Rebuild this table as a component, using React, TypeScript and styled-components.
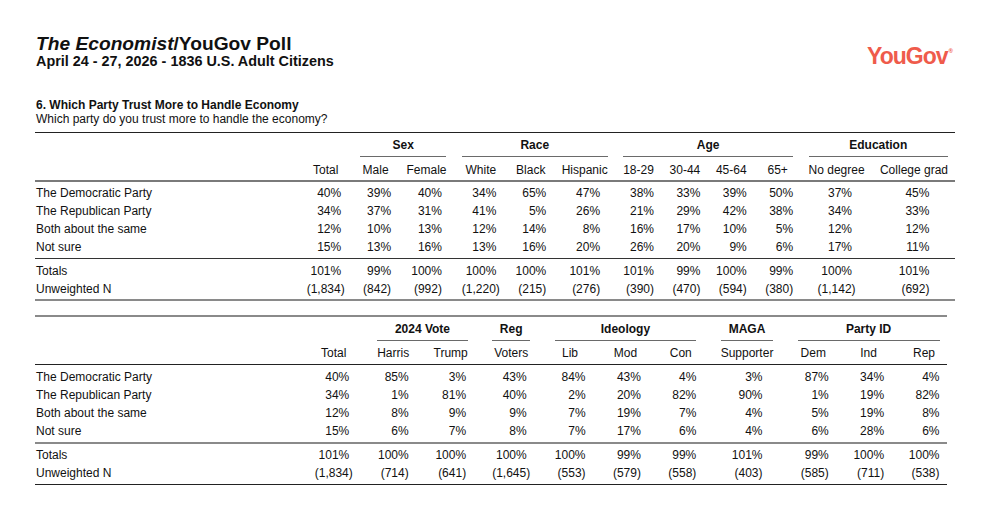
import styled, { createGlobalStyle } from "styled-components";

/* ===============================
   Global
================================ */

const GlobalStyle = createGlobalStyle`
  html, body {
    margin: 0;
    padding: 0;
    background: #ffffff;
  }

  body {
    font-family: "Liberation Sans", Arial, Helvetica, sans-serif;
    color: #111111;
  }
`;

/* ===============================
   Page + header
================================ */

const Page = styled.div`
  width: 920px;
  padding: 34.4px 0 0 35px;
`;

const Header = styled.header`
  display: flex;
  justify-content: space-between;
  align-items: flex-start;
  padding-left: 1px;
`;

const TitleBlock = styled.div`
  display: flex;
  flex-direction: column;
`;

const Title = styled.h1`
  margin: 0;
  font-size: 19.2px;
  line-height: 20px;
  font-weight: 700;

  em {
    font-style: italic;
  }
`;

const Subtitle = styled.div`
  margin-top: -1px;
  font-size: 14.4px;
  line-height: 17px;
  font-weight: 700;
`;

const Logo = styled.div`
  margin-top: 10.6px;
  margin-right: 2px;
  display: flex;
  align-items: flex-start;

  color: #ef5b4b;
  font-size: 23px;
  line-height: 23px;
  font-weight: 700;
  letter-spacing: -1px;

  sup {
    font-size: 6px;
    line-height: 6px;
    letter-spacing: 0;
    margin: 3px 0 0 1px;
  }
`;

/* ===============================
   Question
================================ */

const Question = styled.div`
  margin-top: 27.5px;
  padding-left: 1px;
  font-size: 12px;
  line-height: 14px;
`;

const QuestionTitle = styled.div`
  font-weight: 700;
`;

/* ===============================
   Crosstab table
================================ */

type TableLook = {
  $width: number;
  $pad: number;
  $edge: number;
  $top: string;
  $bottom: string;
  $headRule: string;
  $midRule: string;
  $headPad: string;
  $row: number;
  $first: number;
  $lastPad: number;
  $totPad: number;
  $totBottom: number;
  $gap: number;
};

const Table = styled.table<TableLook>`
  --pad: ${(p) => p.$pad}px;
  --edge: ${(p) => p.$edge}px;
  --row: ${(p) => p.$row}px;

  width: ${(p) => p.$width}px;
  margin-top: ${(p) => p.$gap}px;
  border-collapse: separate;
  border-spacing: 0;
  border-top: ${(p) => p.$top};
  border-bottom: ${(p) => p.$bottom};

  font-size: 12px;
  color: #111111;

  th,
  td {
    padding: 0 var(--pad);
    white-space: nowrap;
    text-align: center;
    font-weight: 400;
  }

  th:first-child,
  td:first-child {
    width: 100%;
    padding: 0 0 0 1px;
    text-align: left;
  }

  th:last-child,
  td:last-child {
    padding-right: var(--edge);
  }

  thead tr:first-child th {
    padding-top: 5px;
  }

  thead tr:nth-child(2) th {
    padding-top: ${(p) => p.$headPad.split(" ")[0]};
    padding-bottom: ${(p) => p.$headPad.split(" ")[1]};
    line-height: 14px;
    border-bottom: ${(p) => p.$headRule};
  }

  tbody td {
    line-height: var(--row);
  }

  tbody:first-of-type tr:first-child td {
    padding-top: ${(p) => p.$first}px;
  }

  tbody:first-of-type tr:last-child td {
    padding-bottom: ${(p) => p.$lastPad}px;
    border-bottom: ${(p) => p.$midRule};
  }

  tbody:last-of-type tr:first-child td {
    padding-top: ${(p) => p.$totPad}px;
  }

  tbody:last-of-type tr:last-child td {
    padding-bottom: ${(p) => p.$totBottom}px;
  }

  tbody:last-of-type tr td {
    line-height: 18px;
  }
`;

const GroupLine = styled.div`
  line-height: 14px;
  padding-bottom: 4px;
  border-bottom: 1px solid #6a6a6a;
  font-weight: 700;
`;

const Num = styled.span`
  display: inline-block;
  min-width: 31px;
  text-align: right;
`;

/* ===============================
   Data
================================ */

type Group = { label: string; cols: string[] };
type Row = { label: string; values: string[] };

const pct = (list: number[]) => list.map((n) => `${n}%`);

const TABLE_ONE = {
  groups: [
    { label: "Sex", cols: ["Male", "Female"] },
    { label: "Race", cols: ["White", "Black", "Hispanic"] },
    { label: "Age", cols: ["18-29", "30-44", "45-64", "65+"] },
    { label: "Education", cols: ["No degree", "College grad"] },
  ] as Group[],
  rows: [
    { label: "The Democratic Party", values: pct([40, 39, 40, 34, 65, 47, 38, 33, 39, 50, 37, 45]) },
    { label: "The Republican Party", values: pct([34, 37, 31, 41, 5, 26, 21, 29, 42, 38, 34, 33]) },
    { label: "Both about the same", values: pct([12, 10, 13, 12, 14, 8, 16, 17, 10, 5, 12, 12]) },
    { label: "Not sure", values: pct([15, 13, 16, 13, 16, 20, 26, 20, 9, 6, 17, 11]) },
  ] as Row[],
  totals: [
    { label: "Totals", values: pct([101, 99, 100, 100, 100, 101, 101, 99, 100, 99, 100, 101]) },
    {
      label: "Unweighted N",
      values: ["(1,834)", "(842)", "(992)", "(1,220)", "(215)", "(276)", "(390)", "(470)", "(594)", "(380)", "(1,142)", "(692)"],
    },
  ] as Row[],
};

const TABLE_TWO = {
  groups: [
    { label: "2024 Vote", cols: ["Harris", "Trump"] },
    { label: "Reg", cols: ["Voters"] },
    { label: "Ideology", cols: ["Lib", "Mod", "Con"] },
    { label: "MAGA", cols: ["Supporter"] },
    { label: "Party ID", cols: ["Dem", "Ind", "Rep"] },
  ] as Group[],
  rows: [
    { label: "The Democratic Party", values: pct([40, 85, 3, 43, 84, 43, 4, 3, 87, 34, 4]) },
    { label: "The Republican Party", values: pct([34, 1, 81, 40, 2, 20, 82, 90, 1, 19, 82]) },
    { label: "Both about the same", values: pct([12, 8, 9, 9, 7, 19, 7, 4, 5, 19, 8]) },
    { label: "Not sure", values: pct([15, 6, 7, 8, 7, 17, 6, 4, 6, 28, 6]) },
  ] as Row[],
  totals: [
    { label: "Totals", values: pct([101, 100, 100, 100, 100, 99, 99, 101, 99, 100, 100]) },
    {
      label: "Unweighted N",
      values: ["(1,834)", "(714)", "(641)", "(1,645)", "(553)", "(579)", "(558)", "(403)", "(585)", "(711)", "(538)"],
    },
  ] as Row[],
};

/* ===============================
   Crosstab component
================================ */

type CrosstabProps = {
  groups: Group[];
  rows: Row[];
  totals: Row[];
  look: TableLook;
};

function Crosstab({ groups, rows, totals, look }: CrosstabProps) {
  const columns = ["Total", ...groups.flatMap((g) => g.cols)];

  return (
    <Table {...look}>
      <thead>
        <tr>
          <th />
          <th />
          {groups.map((g) => (
            <th key={g.label} colSpan={g.cols.length}>
              <GroupLine>{g.label}</GroupLine>
            </th>
          ))}
        </tr>
        <tr>
          <th />
          {columns.map((c) => (
            <th key={c}>{c}</th>
          ))}
        </tr>
      </thead>

      <tbody>
        {rows.map((r) => (
          <tr key={r.label}>
            <td>{r.label}</td>
            {r.values.map((v, i) => (
              <td key={i}>
                <Num>{v}</Num>
              </td>
            ))}
          </tr>
        ))}
      </tbody>

      <tbody>
        {totals.map((r) => (
          <tr key={r.label}>
            <td>{r.label}</td>
            {r.values.map((v, i) => (
              <td key={i}>
                <Num>{v}</Num>
              </td>
            ))}
          </tr>
        ))}
      </tbody>
    </Table>
  );
}

/* ===============================
   App
================================ */

export default function App() {
  return (
    <>
      <GlobalStyle />
      <Page>
        <Header>
          <TitleBlock>
            <Title>
              <em>The Economist</em>/YouGov Poll
            </Title>
            <Subtitle>April 24 - 27, 2026 - 1836 U.S. Adult Citizens</Subtitle>
          </TitleBlock>

          <Logo>
            YouGov<sup>®</sup>
          </Logo>
        </Header>

        <Question>
          <QuestionTitle>6. Which Party Trust More to Handle Economy</QuestionTitle>
          <div>Which party do you trust more to handle the economy?</div>
        </Question>

        <Crosstab
          {...TABLE_ONE}
          look={{
            $width: 920,
            $pad: 7.7,
            $edge: 7,
            $top: "1px solid #222",
            $bottom: "2px solid #8a8a8a",
            $headRule: "2px solid #7a7a7a",
            $midRule: "1px solid #333",
            $headPad: "6px 3px",
            $row: 18,
            $first: 2,
            $lastPad: 2,
            $totPad: 3,
            $totBottom: 1,
            $gap: 6.5,
          }}
        />

        <Crosstab
          {...TABLE_TWO}
          look={{
            $width: 912,
            $pad: 12.2,
            $edge: 7.5,
            $top: "2px solid #8a8a8a",
            $bottom: "1px solid #222",
            $headRule: "1px solid #222",
            $midRule: "2px solid #8a8a8a",
            $headPad: "5px 4px",
            $row: 17.7,
            $first: 4,
            $lastPad: 1.5,
            $totPad: 2,
            $totBottom: 2,
            $gap: 14,
          }}
        />
      </Page>
    </>
  );
}
